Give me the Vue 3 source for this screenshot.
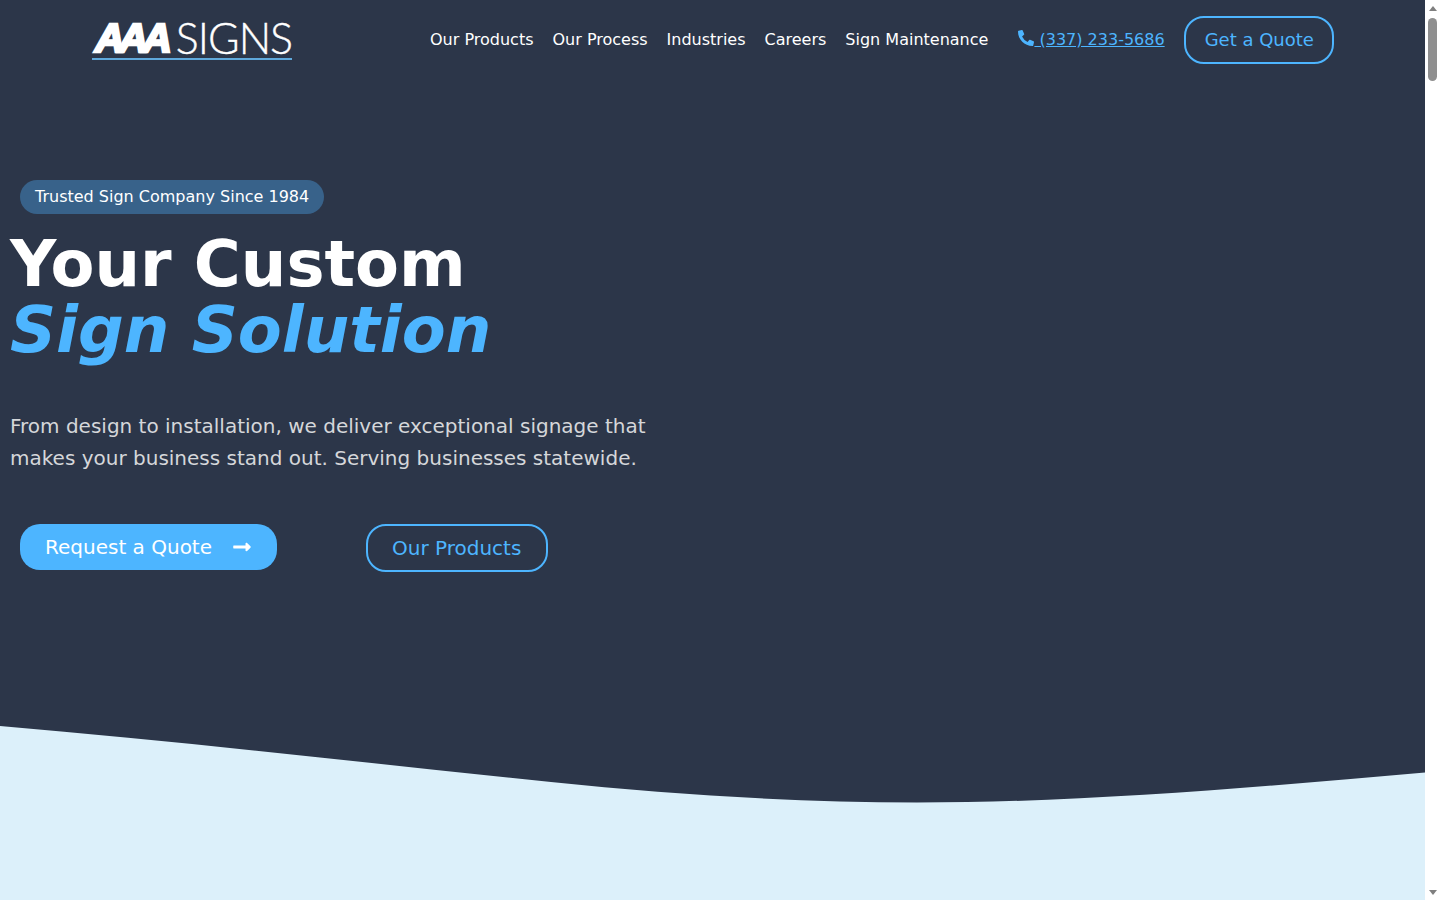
<script setup>
const navLinks = ['Our Products', 'Our Process', 'Industries', 'Careers', 'Sign Maintenance']
</script>

<template>
  <div class="shell">
    <div class="page">
      <header class="site-header">
        <a class="logo" href="#">
          <span class="logo-aaa">AAA</span>
          <span class="logo-signs">SIGNS</span>
        </a>
        <nav class="nav">
          <a v-for="link in navLinks" :key="link" href="#">{{ link }}</a>
        </nav>
        <a class="phone" href="#">
          <svg viewBox="0 0 512 512" class="phone-icon"><path fill="currentColor" d="M497.39 361.8l-112-48a24 24 0 0 0-28 6.9l-49.6 60.6A370.66 370.66 0 0 1 130.6 204.11l60.6-49.6a23.94 23.94 0 0 0 6.9-28l-48-112A24.16 24.16 0 0 0 122.6.61l-104 24A24 24 0 0 0 0 48c0 256.5 207.9 464 464 464a24 24 0 0 0 23.4-18.6l24-104a24.29 24.29 0 0 0-14.01-27.6z"/></svg>
          (337) 233-5686
        </a>
        <a class="quote-btn" href="#">Get a Quote</a>
      </header>

      <section class="hero">
        <span class="badge">Trusted Sign Company Since 1984</span>
        <h1>Your Custom<br><em>Sign Solution</em></h1>
        <p class="lead">From design to installation, we deliver exceptional signage that makes your business stand out. Serving businesses statewide.</p>
        <div class="actions">
          <a class="btn-primary" href="#">
            Request a Quote
            <svg viewBox="0 0 448 512" class="arrow"><path fill="currentColor" d="M313.941 216H12c-6.627 0-12 5.373-12 12v56c0 6.627 5.373 12 12 12h301.941v46.059c0 21.382 25.851 32.09 40.971 16.971l86.059-86.059c9.373-9.373 9.373-24.569 0-33.941l-86.059-86.059c-15.119-15.119-40.971-4.411-40.971 16.971V216z"/></svg>
          </a>
          <a class="btn-outline" href="#">Our Products</a>
        </div>
      </section>

      <svg class="wave" viewBox="0 0 1425 77" preserveAspectRatio="none">
        <path fill="#dcf0fa" d="M0 0C184 15.600 367 37 551 56C673 68.500 795 76.500 917 76.500C1086 76.500 1256 61.400 1425 46.500V77H0Z"/>
      </svg>
      <section class="next-section"></section>
    </div>

    <aside class="scrollbar">
      <span class="arrow-up"></span>
      <span class="thumb"></span>
      <span class="arrow-down"></span>
    </aside>
  </div>
</template>

<style scoped>
.shell {
  display: flex;
  height: 900px;
  overflow: hidden;
}
.page {
  flex: 1;
  min-width: 0;
  background: #2c3649;
  font-family: "DejaVu Sans", sans-serif;
  color: #fff;
}
.scrollbar {
  display: flex;
  flex-direction: column;
  align-items: center;
  width: 15px;
  padding: 6px 0 5px;
  box-sizing: border-box;
  background: #fff;
}
.arrow-up,
.arrow-down {
  width: 0;
  height: 0;
  border-left: 4.500px solid transparent;
  border-right: 4.500px solid transparent;
}
.arrow-up {
  border-bottom: 5px solid #7f7f7f;
}
.arrow-down {
  margin-top: auto;
  border-top: 5px solid #7f7f7f;
}
.thumb {
  width: 9px;
  height: 63px;
  margin-top: 7px;
  border-radius: 5px;
  background: #8f8f8f;
}
a {
  text-decoration: none;
  white-space: nowrap;
}
.site-header {
  display: flex;
  align-items: center;
  height: 78px;
  padding: 0 91px 2px 92px;
}
.logo {
  display: flex;
  flex: none;
  align-items: center;
  width: 200px;
  height: 38px;
  margin-top: 1px;
  border-bottom: 2px solid #5fa9dc;
  color: #fff;
}
.logo-aaa {
  padding-left: 3px;
  font-family: "Liberation Sans", sans-serif;
  font-weight: 700;
  font-style: italic;
  font-size: 41px;
  letter-spacing: -6px;
  -webkit-text-stroke: 2.600px #fff;
  line-height: 36px;
  margin-top: -1px;
}
.logo-signs {
  margin-left: 10px;
  font-family: "Lato", sans-serif;
  font-weight: 300;
  font-size: 43px;
  letter-spacing: -1px;
  -webkit-text-stroke: 0.4px #fff;
  line-height: 36px;
  margin-top: -1px;
}
.nav {
  display: flex;
  gap: 19px;
  margin-left: 138px;
}
.nav a {
  color: #fff;
  font-size: 16px;
}
.phone {
  margin-left: 30px;
  color: #4db5ff;
  font-size: 16px;
  text-decoration: underline;
}
.phone-icon {
  width: 16px;
  height: 16px;
  vertical-align: -1px;
}
.quote-btn {
  margin-left: 19.500px;
  margin-top: 2px;
  padding: 8px 18.500px;
  border: 2px solid #4db5ff;
  border-radius: 20px;
  color: #4db5ff;
  font-size: 18px;
  line-height: 28px;
}
.hero {
  height: 646px;
  padding: 100px 0 0 10px;
  box-sizing: border-box;
}
.badge {
  display: inline-block;
  margin-left: 10px;
  padding: 0 15px;
  border-radius: 17px;
  background: #38628a;
  font-size: 16px;
  line-height: 34px;
}
h1 {
  margin: 17px 0 0;
  font-size: 64px;
  line-height: 66px;
  font-weight: 700;
}
h1 em {
  color: #4db5ff;
  font-style: italic;
}
.lead {
  width: 660px;
  margin: 47px 0 0;
  color: #d5d7da;
  font-size: 20px;
  line-height: 32px;
}
.actions {
  display: flex;
  align-items: flex-start;
  margin: 50px 0 0 10px;
}
.btn-primary {
  display: flex;
  align-items: center;
  gap: 21px;
  height: 46px;
  padding: 0 26px 0 25px;
  border-radius: 20px;
  background: #4db5ff;
  color: #fff;
  font-size: 20px;
}
.arrow {
  width: 18px;
  height: 20px;
}
.btn-outline {
  margin-left: 89px;
  padding: 0 25px 0 24px;
  border: 2px solid #4db5ff;
  border-radius: 20px;
  color: #4db5ff;
  font-size: 20px;
  line-height: 44px;
}
.wave {
  display: block;
  width: 100%;
  height: 77px;
}
.next-section {
  height: 100px;
  background: #dcf0fa;
}
</style>
